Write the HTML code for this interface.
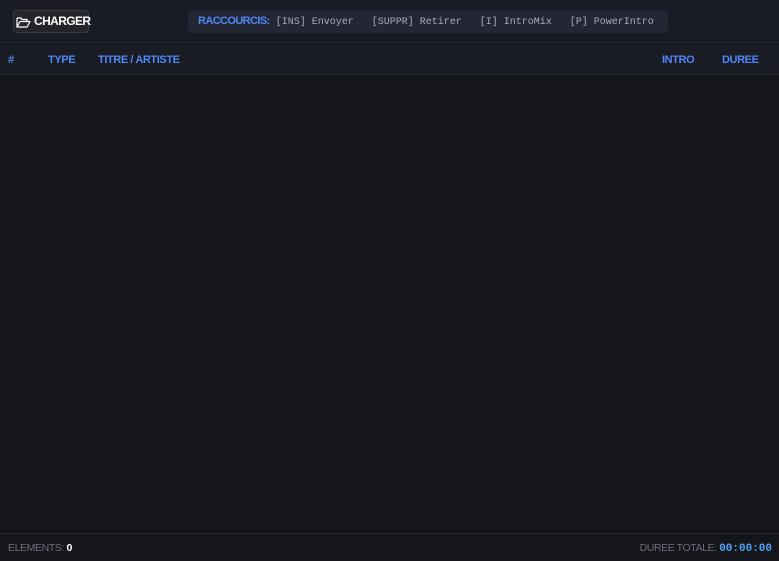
<!DOCTYPE html>
<html><head><meta charset="utf-8"><style>
*{margin:0;padding:0;box-sizing:border-box}
body{width:779px;height:561px;background:#15161b;font-family:"Liberation Sans",sans-serif;position:relative;overflow:hidden;color:#fff}
.top{position:absolute;left:0;top:0;width:779px;height:43px;background:#1a1c25;border-bottom:1px solid #262834}
.btn{position:absolute;left:13px;top:10px;width:76px;height:23px;background:#24252b;border:1px solid #3a3b42;border-radius:4px;font-weight:bold;font-size:12px;line-height:21px;padding-left:20px;letter-spacing:-0.6px}
.btn svg{position:absolute;left:2px;top:5px}
.sc{position:absolute;left:188px;top:10px;width:480px;height:23px;background:#232633;border-radius:5px;font-size:11px;line-height:23px;padding-left:10px;white-space:pre}
.sc b{color:#4f86f7;font-size:11px;letter-spacing:-0.6px}
.sc span{font-family:"Liberation Mono","DejaVu Sans Mono",monospace;color:#a9acb8;font-size:10px}
.hdr{position:absolute;left:0;top:44px;width:779px;height:31px;background:#1a1c25;border-bottom:1px solid #262834;font-weight:bold;color:#4f86f7;font-size:11px;letter-spacing:-0.4px}
.hdr div{position:absolute;top:10px}
.ft{position:absolute;left:0;top:533px;width:779px;height:28px;border-top:1px solid #262834;font-size:10.5px;color:#6b6f7b;letter-spacing:-0.4px}
.ft .l{position:absolute;left:8px;top:8px}
.ft .r{position:absolute;right:7px;top:8px}
.ft b{color:#fff}
.ft .t{color:#4fa3f7;font-family:"Liberation Mono",monospace;font-weight:bold;font-size:11px;letter-spacing:0}
</style></head><body>
<div class="top">
<div class="btn"><svg width="15" height="12" viewBox="0 0 15 12"><path d="M1 2h4l1 1.5h5v2" fill="none" stroke="#fff" stroke-width="1.2"/><path d="M1 2v9h10l3-5.5H4L1 11" fill="none" stroke="#fff" stroke-width="1.2" stroke-linejoin="round"/></svg>CHARGER</div>
<div class="sc"><b>RACCOURCIS:</b>  <span>[INS] Envoyer   [SUPPR] Retirer   [I] IntroMix   [P] PowerIntro</span></div>
</div>
<div class="hdr">
<div style="left:8px">#</div>
<div style="left:48px">TYPE</div>
<div style="left:98px">TITRE / ARTISTE</div>
<div style="left:662px">INTRO</div>
<div style="left:722px">DUREE</div>
</div>
<div class="ft">
<div class="l">ELEMENTS: <b>0</b></div>
<div class="r">DUREE TOTALE: <span class="t">00:00:00</span></div>
</div>
</body></html>
